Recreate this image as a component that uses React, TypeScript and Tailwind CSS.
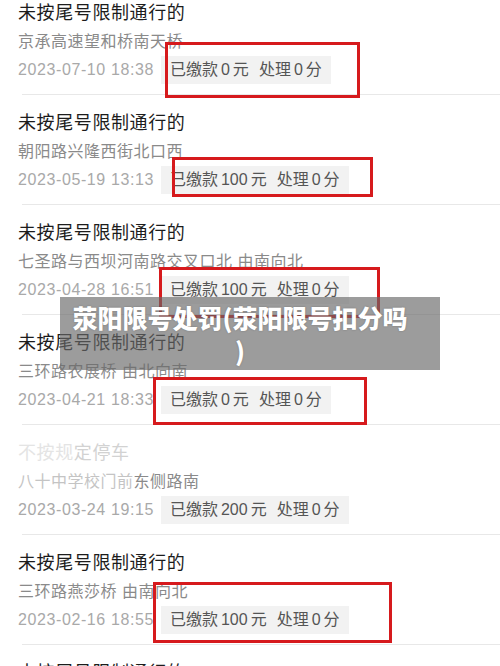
import React from "react";

type Item = {
  title: React.ReactNode;
  addr: React.ReactNode;
  date: string;
  fine: string;
};

const items: Item[] = [
  { title: "未按尾号限制通行的", addr: "京承高速望和桥南天桥", date: "2023-07-10 18:38", fine: "0" },
  { title: "未按尾号限制通行的", addr: "朝阳路兴隆西街北口西", date: "2023-05-19 13:13", fine: "100" },
  { title: "未按尾号限制通行的", addr: "七圣路与西坝河南路交叉口北 由南向北", date: "2023-04-28 16:51", fine: "100" },
  { title: "未按尾号限制通行的", addr: "三环路农展桥 由北向南", date: "2023-04-21 18:33", fine: "0" },
  {
    title: (
      <>
        <span className="text-[#e4e4e4]">不按规</span>
        <span className="text-[#d2d2d2]">定停车</span>
      </>
    ),
    addr: (
      <>
        <span className="text-[#c4c4c4]">八十中学校门前</span>
        <span>东侧路南</span>
      </>
    ),
    date: "2023-03-24 19:15",
    fine: "200",
  },
  { title: "未按尾号限制通行的", addr: "三环路燕莎桥 由南向北", date: "2023-02-16 18:55", fine: "100" },
  { title: "未按尾号限制通行的", addr: "三环路燕莎桥 由南向北", date: "2023-02-10 18:55", fine: "100" },
];

const font = "font-['Liberation_Sans','Noto_Sans_CJK_SC',sans-serif]";

function Row({ it }: { it: Item }) {
  return (
    <div>
      <div className="pl-[18px] pt-[16px] pb-[10px]">
        <div className="text-[18px] leading-[24px] tracking-[0.6px] text-[#1c1c1c]">{it.title}</div>
        <div className="mt-[6px] text-[16px] leading-[22px] tracking-[0.5px] text-[#8a8a8a] whitespace-nowrap">{it.addr}</div>
        <div className="mt-[3px] flex items-center gap-[7px]">
          <div className="text-[16px] leading-[22px] tracking-[0.6px] text-[#a9a9a9] whitespace-nowrap">{it.date}</div>
          <div className="h-[28px] px-[9px] flex items-center bg-[#f2f2f2] text-[16px] text-[#555555] whitespace-nowrap">
            <span>已缴款</span>
            <span className="mx-[3px]">{it.fine}</span>
            <span>元</span>
            <span className="ml-[10px]">处理</span>
            <span className="mx-[3px]">0</span>
            <span>分</span>
          </div>
        </div>
      </div>
      <div className="ml-[22px] h-px bg-[#e8e8e8]" />
    </div>
  );
}

const boxes = [
  "left-[165px] top-[42px] w-[195px] h-[56px]",
  "left-[172px] top-[157px] w-[201px] h-[40px]",
  "left-[159px] top-[267px] w-[221px] h-[51px]",
  "left-[153px] top-[377px] w-[214px] h-[48px]",
  "left-[153px] top-[582px] w-[239px] h-[61px]",
];

export default function App() {
  return (
    <div className={`relative w-[500px] h-[666px] overflow-hidden bg-white ${font}`}>
      <div className="-mt-[15px]">
        {items.map((it, i) => (
          <Row key={i} it={it} />
        ))}
      </div>
      {boxes.map((b, i) => (
        <div key={i} className={`absolute border-[3px] border-[#d61a1d] ${b}`} />
      ))}
      <div className="absolute left-[60px] top-[297px] w-[380px] h-[73px] bg-[rgba(105,105,105,0.66)] flex items-center justify-center pr-[20px]">
        <div className="text-center text-white font-black text-[25px] leading-[33px] font-['Noto_Sans_CJK_SC',sans-serif] [text-shadow:0_0_2px_rgba(0,0,0,0.25)]">
          荥阳限号处罚(荥阳限号扣分吗
          <br />)
        </div>
      </div>
    </div>
  );
}
